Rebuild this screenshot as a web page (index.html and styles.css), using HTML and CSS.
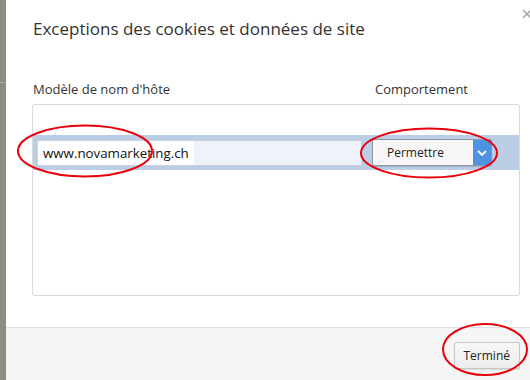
FILE: index.html
```html
<!DOCTYPE html>
<html lang="fr">
<head>
    <meta charset="UTF-8">
    <title>Exceptions des cookies et données de site</title>
    <link rel="stylesheet" href="styles.css">
</head>
<body>
    <div class="backdrop"><div class="backdrop-line"></div></div>
    <div class="dialog">
        <svg class="close" width="8" height="10" viewBox="0 0 8 10"><path d="M1 1 L9 9 M9 1 L1 9" stroke="#aaa" stroke-width="1.6"/></svg>
        <div class="dialog-body">
            <h1>Exceptions des cookies et données de site</h1>
            <div class="columns">
                <span>Modèle de nom d'hôte</span>
                <span class="col-behaviour">Comportement</span>
            </div>
            <div class="list">
                <div class="row selected">
                    <div class="host-input"><span class="host-text">www.novamarketing.ch</span></div>
                    <div class="select">
                        <span class="select-label">Permettre</span>
                        <span class="select-arrow">
                            <svg width="10" height="6" viewBox="0 0 10 6"><path d="M1 1 L5 5 L9 1" fill="none" stroke="#fff" stroke-width="1.8"/></svg>
                        </span>
                    </div>
                </div>
            </div>
        </div>
        <div class="footer">
            <button>Terminé</button>
        </div>
    </div>

    <!-- annotations -->
    <svg class="marks" width="530" height="380" viewBox="0 0 530 380">
        <ellipse cx="85" cy="151" rx="67" ry="25.5" fill="none" stroke="#e8000b" stroke-width="2"/>
        <ellipse cx="429" cy="153" rx="68" ry="24.5" fill="none" stroke="#e8000b" stroke-width="2"/>
        <ellipse cx="485" cy="349.5" rx="42" ry="25.5" fill="none" stroke="#e8000b" stroke-width="2"/>
    </svg>
</body>
</html>
```

FILE: styles.css
```css
body {
    margin: 0;
    width: 530px;
    height: 380px;
    overflow: hidden;
    display: flex;
    position: relative;
    font-family: "Open Sans", "Noto Sans", sans-serif;
    background: #fff;
}
.backdrop {
    width: 6px;
    background: #8d8e82;
    padding-top: 82px;
}
.backdrop-line {
    height: 1px;
    background: #a9aaa0;
}
.dialog {
    flex: 1;
    display: flex;
    flex-direction: column;
    position: relative;
    background: #fff;
}
.close {
    position: absolute;
    right: 0;
    top: 9px;
}
.dialog-body {
    flex: 1;
    padding: 16px 10px 0 27px;
}
h1 {
    margin: 0 0 38px;
    font-size: 17px;
    font-weight: normal;
    color: #333;
    line-height: 26px;
}
.columns {
    display: flex;
    font-size: 13px;
    color: #333;
    line-height: 18px;
    margin-bottom: 6px;
}
.col-behaviour {
    margin-left: auto;
    margin-right: 52px;
}
.list {
    box-sizing: border-box;
    height: 192px;
    margin-left: -1px;
    border: 1px solid #d9d9d9;
    border-radius: 2px;
    padding-top: 30px;
}
.row {
    height: 35px;
    display: flex;
    align-items: center;
    padding-left: 4px;
}
.selected {
    background: #bccde6;
}
.host-input {
    width: 323px;
    height: 24px;
    background: #eef2f9;
    border: 1px solid #c7d0dc;
    display: flex;
    align-items: center;
}
.host-text {
    background: #fff;
    font-size: 13.3px;
    color: #111;
    padding: 0 5px;
    line-height: 24px;
}
.select {
    margin-left: 10px;
    width: 118px;
    height: 25px;
    display: flex;
    background: #f7f7f7;
    border: 1px solid #8e96a3;
    border-radius: 2px;
    box-shadow: 0 1px 1px rgba(0,0,0,0.15);
}
.select-label {
    flex: 1;
    font-size: 12px;
    color: #222;
    line-height: 25px;
    padding-left: 14px;
}
.select-arrow {
    width: 18px;
    background: #4e93e1;
    display: flex;
    align-items: center;
    justify-content: center;
}
.footer {
    height: 53px;
    flex-shrink: 0;
    background: #f5f5f5;
    border-top: 1px solid #e0e0e0;
    display: flex;
    justify-content: flex-end;
    align-items: flex-start;
    padding: 14px 10px 0 0;
    box-sizing: border-box;
}
button {
    font-family: inherit;
    font-size: 12px;
    color: #222;
    height: 27px;
    padding: 0 9px;
    background: linear-gradient(#f7f7f7, #ededed);
    border: 1px solid #c6c6c6;
    border-radius: 2px;
    box-shadow: 0 1px 1px rgba(0,0,0,0.1);
}
.marks {
    position: absolute;
    left: 0;
    top: 0;
    pointer-events: none;
}
```
